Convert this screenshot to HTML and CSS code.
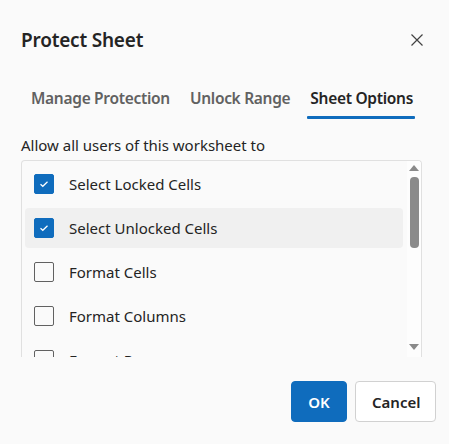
FILE: index.html
```html
<!DOCTYPE html>
<html>
<head>
<meta charset="utf-8">
<link rel="stylesheet" href="styles.css">
</head>
<body>
<div class="dialog">
  <div class="header">
    <h1 class="title">Protect Sheet</h1>
    <button class="close" aria-label="Close">
      <svg width="14" height="14" viewBox="0 0 14 14"><path d="M1.5 1.5 L12.5 12.5 M12.5 1.5 L1.5 12.5" stroke="#424242" stroke-width="1.2" fill="none"/></svg>
    </button>
  </div>
  <div class="tabs">
    <div class="tab">Manage Protection</div>
    <div class="tab">Unlock Range</div>
    <div class="tab active">Sheet Options</div>
  </div>
  <div class="caption">Allow all users of this worksheet to</div>
  <div class="listbox">
    <div class="rows">
      <div class="row"><span class="cb checked"><svg width="10" height="8" viewBox="0 0 10 8"><path d="M1.5 4.2 L3.8 6.3 L8.5 1.7" stroke="#fff" stroke-width="1.2" fill="none"/></svg></span><span class="label">Select Locked Cells</span></div>
      <div class="row hover"><span class="cb checked"><svg width="10" height="8" viewBox="0 0 10 8"><path d="M1.5 4.2 L3.8 6.3 L8.5 1.7" stroke="#fff" stroke-width="1.2" fill="none"/></svg></span><span class="label">Select Unlocked Cells</span></div>
      <div class="row"><span class="cb"></span><span class="label">Format Cells</span></div>
      <div class="row"><span class="cb"></span><span class="label">Format Columns</span></div>
      <div class="row"><span class="cb"></span><span class="label">Format Rows</span></div>
    </div>
    <div class="scrollbar">
      <span class="arrow up"></span>
      <span class="thumb"></span>
      <span class="spacer"></span>
      <span class="arrow down"></span>
    </div>
  </div>
  <div class="footer">
    <button class="btn primary">OK</button>
    <button class="btn">Cancel</button>
  </div>
</div>
</body>
</html>
```
FILE: styles.css
```css
html, body {
  margin: 0;
  padding: 0;
  background: #fafafa;
}
body {
  font-family: "Noto Sans", "Segoe UI", sans-serif;
  color: #242424;
  width: 449px;
  height: 444px;
  overflow: hidden;
}
.dialog {
  padding: 25px 13px 0 21px;
  box-sizing: border-box;
}
.header {
  display: flex;
  justify-content: space-between;
  align-items: center;
  height: 30px;
}
.title {
  margin: 0;
  font-size: 19px;
  font-weight: 600;
  line-height: 30px;
  letter-spacing: -0.2px;
}
.close {
  border: 0;
  background: none;
  padding: 0;
  width: 14px;
  height: 14px;
  margin-right: 12px;
  display: flex;
}
.tabs {
  display: flex;
  margin-top: 26px;
  gap: 0;
}
.tab {
  padding: 0 10px;
  height: 40px;
  line-height: 34px;
  font-size: 15.5px;
  font-weight: 600;
  color: #616161;
  position: relative;
  letter-spacing: -0.3px;
}
.tab.active {
  color: #242424;
}
.tab.active::after {
  content: "";
  position: absolute;
  left: 7px;
  right: 8px;
  bottom: 2px;
  height: 3px;
  border-radius: 1px;
  background: #0f6cbd;
}
.caption {
  margin-top: 14px;
  font-size: 15px;
  line-height: 20px;
  letter-spacing: 0;
}
.listbox {
  margin-top: 5px;
  width: 401px;
  height: 197px;
  box-sizing: border-box;
  border: 1px solid #e0e0e0;
  border-bottom: 0;
  border-radius: 4px 4px 0 0;
  display: flex;
  overflow: hidden;
}
.rows {
  flex: 1;
  padding: 3px 4px 0 3px;
  display: flex;
  flex-direction: column;
  gap: 4px;
}
.row {
  flex: none;
  height: 40px;
  display: flex;
  align-items: center;
  padding-left: 9px;
  border-radius: 4px;
}
.row.hover {
  background: #f0f0f0;
}
.cb {
  width: 20px;
  height: 20px;
  box-sizing: border-box;
  border: 1px solid #616161;
  border-radius: 2px;
  display: flex;
  align-items: center;
  justify-content: center;
  flex: none;
}
.cb.checked {
  background: #0f6cbd;
  border-color: #0f6cbd;
}
.label {
  margin-left: 15px;
  font-size: 15px;
  letter-spacing: 0;
}
.scrollbar {
  width: 14px;
  background: #fdfdfd;
  display: flex;
  flex-direction: column;
  align-items: center;
  padding-top: 4px;
}
.arrow {
  width: 0;
  height: 0;
  border-left: 5px solid transparent;
  border-right: 5px solid transparent;
}
.arrow.up {
  border-bottom: 6px solid #8a8a8a;
}
.arrow.down {
  border-top: 6px solid #8a8a8a;
}
.thumb {
  margin-top: 6px;
  width: 9px;
  height: 71px;
  border-radius: 4px;
  background: #8a8a8a;
}
.spacer {
  height: 96px;
}
.footer {
  display: flex;
  justify-content: flex-end;
  gap: 8px;
  margin-top: 24px;
}
.btn {
  font-family: inherit;
  height: 41px;
  padding: 0 16px;
  min-width: 56px;
  border-radius: 4px;
  border: 1px solid #d1d1d1;
  background: #fff;
  color: #242424;
  font-size: 15px;
  font-weight: 600;
}
.btn.primary {
  background: #0f6cbd;
  border-color: #0f6cbd;
  color: #fff;
}
.btn:last-child {
  width: 81px;
}
```
